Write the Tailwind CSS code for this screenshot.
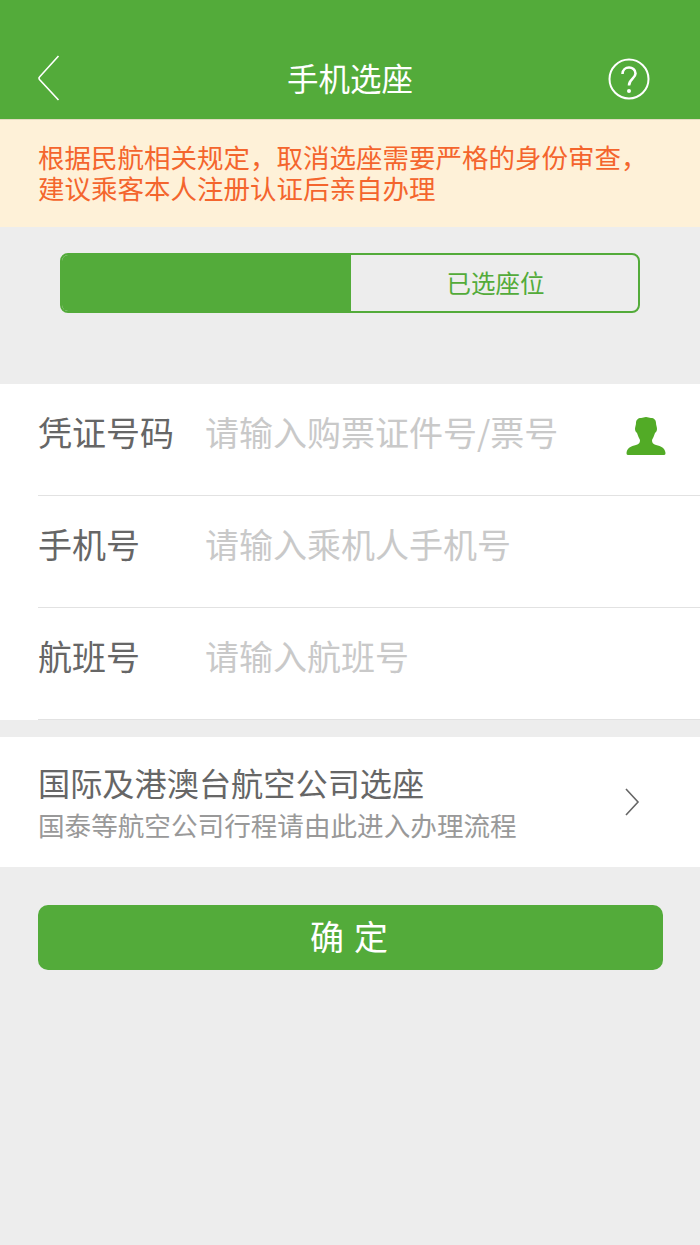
<!DOCTYPE html>
<html lang="zh-CN">
<head>
<meta charset="utf-8">
<script src="https://cdn.jsdelivr.net/npm/@tailwindcss/browser@4"></script>
</head>
<body class="m-0">
<div class="w-[700px] h-[1245px] overflow-hidden bg-[#ededed] flex flex-col font-['Noto_Sans_CJK_SC','Noto_Sans',sans-serif]">
  <header class="h-[120px] shrink-0 bg-[#53ab3a] border-b border-[#e3dcc0] pt-[38px] pl-[38px] pr-[50px] grid grid-cols-[1fr_auto_1fr] items-center">
    <svg class="w-[22px] h-[46px] -mt-[2px]" viewBox="0 0 22 46" fill="none" stroke="#fff" stroke-width="1.6"><path d="M20.5 1 L1.5 22 Q0.5 23 1.5 24.5 L20.5 45"/></svg>
    <h1 class="text-[31.5px] leading-none font-normal text-white ml-[12px] -mt-[2px]">手机选座</h1>
    <svg class="w-[42px] h-[42px] justify-self-end" viewBox="0 0 42 42" fill="none" stroke="#fff" stroke-width="2"><circle cx="21" cy="21" r="19.5"/><path d="M14.5 16 C14.5 7.5 27.5 7.5 27.5 15.5 C27.5 20.5 21 21 21 27.5" stroke-width="2.6"/><circle cx="21" cy="33" r="2" fill="#fff" stroke="none"/></svg>
  </header>
  <section class="h-[107px] shrink-0 bg-[#fef1d8] px-[38px] pt-[21px] text-[26.5px] leading-[31px] text-[#f4652d]">
    <p class="whitespace-nowrap">根据民航相关规定，取消选座需要严格的身份审查，</p>
    <p class="whitespace-nowrap">建议乘客本人注册认证后亲自办理</p>
  </section>
  <div class="mx-[60px] mt-[26px] h-[60px] shrink-0 rounded-[8px] border-2 border-[#53ab3a] flex overflow-hidden">
    <div class="w-[289px] bg-[#53ab3a]"></div>
    <div class="flex-1 flex items-center justify-center pl-[2px] text-[24.5px] text-[#53ab3a]">已选座位</div>
  </div>
  <section class="mt-[71px] h-[336px] shrink-0 bg-white text-[34px] leading-none">
    <div class="h-[112px] ml-[38px] border-b border-[#e2e2e2] flex items-center">
      <span class="w-[167px] text-[#666] -mt-[15px]">凭证号码</span>
      <span class="flex-1 text-[#c9c9c9] -mt-[15px]">请输入购票证件号/票号</span>
      <svg class="w-[40px] h-[38px] mr-[34px] -mt-[8px]" viewBox="0 0 40 38" fill="#52ab26"><path d="M20 0 C22 0 23 1 25 1 C28 1 30 3 30 6 C30 8 31 10 31 12 C31 14 30 15 29 16 C28 19 27 21 26 23 C26 26 27 27 30 28 C35 29 39 31 39.5 36 C39.5 38 38.5 38 37 38 L3 38 C1.5 38 .5 38 .5 36 C1 31 5 29 10 28 C13 27 14 26 14 23 C13 21 12 19 11 16 C10 15 9 14 9 12 C9 10 10 8 10 6 C10 3 12 1 15 1 C17 1 18 0 20 0 Z"/></svg>
    </div>
    <div class="h-[112px] ml-[38px] border-b border-[#e2e2e2] flex items-center">
      <span class="w-[167px] text-[#666] -mt-[15px]">手机号</span>
      <span class="flex-1 text-[#c9c9c9] -mt-[15px]">请输入乘机人手机号</span>
    </div>
    <div class="h-[112px] ml-[38px] border-b border-[#e2e2e2] flex items-center">
      <span class="w-[167px] text-[#666] -mt-[15px]">航班号</span>
      <span class="flex-1 text-[#c9c9c9] -mt-[15px]">请输入航班号</span>
    </div>
  </section>
  <section class="mt-[17px] h-[130px] shrink-0 bg-white pl-[38px] pr-[60px] flex items-center justify-between">
    <div>
      <div class="text-[32.2px] leading-[38px] text-[#666]">国际及港澳台航空公司选座</div>
      <div class="text-[26.6px] leading-[32px] text-[#999] mt-[8px]">国泰等航空公司行程请由此进入办理流程</div>
    </div>
    <svg class="w-[16px] h-[28px]" viewBox="0 0 16 28" fill="none" stroke="#666" stroke-width="1.6"><path d="M2 1 L14 14 L2 27"/></svg>
  </section>
  <button class="mt-[38px] mx-[38px] h-[65px] w-[625px] shrink-0 rounded-[10px] bg-[#53ab3a] text-white text-[34px] leading-none tracking-[10px] pb-[4px] pl-[7px] flex items-center justify-center">确定</button>
</div>
</body>
</html>
